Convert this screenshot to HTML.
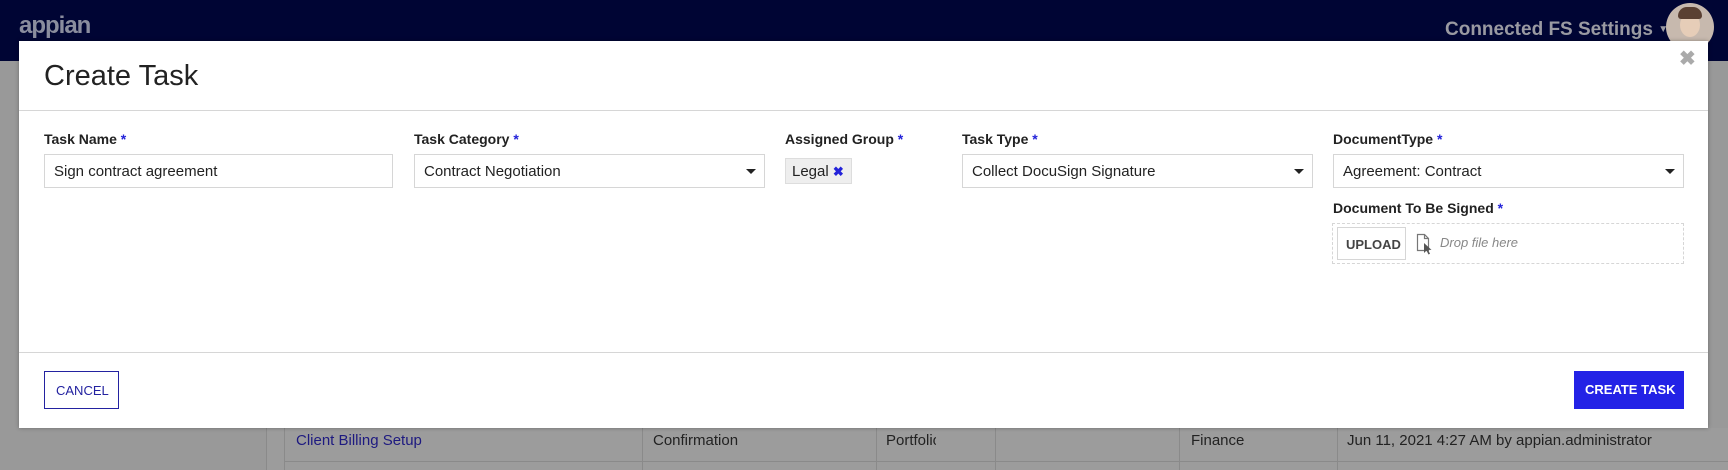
<!DOCTYPE html>
<html><head><meta charset="utf-8"><style>
*{box-sizing:border-box;margin:0;padding:0}
body{width:1728px;height:470px;overflow:hidden;background:#999;font-family:"Liberation Sans",sans-serif;position:relative}
.nav{position:absolute;left:0;top:0;width:1728px;height:61px;background:#000534}
.abs{position:absolute}
.lbl{position:absolute;font-size:14px;font-weight:bold;color:#222}
.lbl b{color:#2322d9}
.inp{position:absolute;height:34px;border:1px solid #d6d6d6;background:#fff;font-size:15px;color:#222;padding:8px 9px;white-space:nowrap}
.arr{position:absolute;right:8px;top:14px;width:0;height:0;border-left:5px solid transparent;border-right:5px solid transparent;border-top:5px solid #222}
.tx{position:absolute;font-size:15px;color:#222;top:432px}
.vl{position:absolute;top:428px;height:42px;width:1px;background:#8a8a8a}
</style></head><body>
<div class="nav"></div>
<div class="abs" style="left:19px;top:12px;font-size:24px;color:#8a8d9e;font-weight:bold;letter-spacing:-1px">appian</div>
<div class="abs" style="left:1445px;top:19px;font-size:19px;color:#9a9aa2;font-weight:bold">Connected FS Settings <span style="font-size:10px;vertical-align:3px">▼</span></div>
<div class="abs" style="left:1666px;top:3px;width:48px;height:48px;border-radius:50%;background:#c7b9ae;overflow:hidden"><div style="position:absolute;left:14px;top:10px;width:20px;height:24px;border-radius:50%;background:#e6cdb8"></div><div style="position:absolute;left:12px;top:4px;width:24px;height:12px;border-radius:12px 12px 4px 4px;background:#5a4032"></div></div>
<!-- background table -->
<div class="abs" style="left:266px;top:428px;width:1462px;height:42px;background:#9c9c9c"></div>
<div class="abs" style="left:284px;top:461px;width:1444px;height:1px;background:#8a8a8a"></div>
<div class="vl" style="left:266px"></div><div class="vl" style="left:284px"></div><div class="vl" style="left:642px"></div><div class="vl" style="left:876px"></div><div class="vl" style="left:995px"></div><div class="vl" style="left:1179px"></div><div class="vl" style="left:1337px"></div>
<div class="tx" style="left:296px;color:#1e1a80">Client Billing Setup</div>
<div class="tx" style="left:653px">Confirmation</div>
<div class="tx" style="left:886px;width:50px;overflow:hidden;white-space:nowrap">Portfolio</div>
<div class="tx" style="left:1191px">Finance</div>
<div class="tx" style="left:1347px">Jun 11, 2021 4:27 AM by appian.administrator</div>
<!-- modal -->
<div class="abs" style="left:19px;top:41px;width:1689px;height:387px;background:#fff;box-shadow:0 0 4px rgba(0,0,0,.3)"></div>
<div class="abs" style="left:44px;top:60px;font-size:29px;color:#222">Create Task</div>
<div class="abs" style="left:1679px;top:46px;font-size:20px;color:#aaa;font-weight:bold">✖</div>
<div class="abs" style="left:19px;top:110px;width:1689px;height:1px;background:#d6d6d6"></div>
<div class="abs" style="left:19px;top:352px;width:1689px;height:1px;background:#d6d6d6"></div>

<div class="lbl" style="left:44px;top:131px">Task Name <b>*</b></div>
<div class="inp" style="left:44px;top:154px;width:349px">Sign contract agreement</div>
<div class="lbl" style="left:414px;top:131px">Task Category <b>*</b></div>
<div class="inp" style="left:414px;top:154px;width:351px">Contract Negotiation<span class="arr"></span></div>
<div class="lbl" style="left:785px;top:131px">Assigned Group <b>*</b></div>
<div class="abs" style="left:785px;top:158px;width:67px;height:26px;background:#eee;border:1px solid #ddd;font-size:15px;color:#222;padding:4px 6px">Legal <span style="color:#2322d9;font-size:13px;font-weight:bold">✖</span></div>
<div class="lbl" style="left:962px;top:131px">Task Type <b>*</b></div>
<div class="inp" style="left:962px;top:154px;width:351px">Collect DocuSign Signature<span class="arr"></span></div>
<div class="lbl" style="left:1333px;top:131px">DocumentType <b>*</b></div>
<div class="inp" style="left:1333px;top:154px;width:351px">Agreement: Contract<span class="arr"></span></div>
<div class="lbl" style="left:1333px;top:200px">Document To Be Signed <b>*</b></div>
<div class="abs" style="left:1332px;top:223px;width:352px;height:41px;border:1px dashed #d6d6d6"></div>
<div class="abs" style="left:1337px;top:227px;width:69px;height:33px;border:1px solid #d6d6d6;font-size:13px;font-weight:bold;color:#444;padding:9px 0 0 8px">UPLOAD</div>
<svg class="abs" style="left:1416px;top:233px" width="18" height="22" viewBox="0 0 18 22"><path d="M1.5 1.5h7l4 4v12h-11z M8.5 1.5v4h4" fill="none" stroke="#777" stroke-width="1.2"/><path d="M8 10l0 10 2.5-2.5 2 4 1.5-.8-2-3.8h3.5z" fill="#555"/></svg>
<div class="abs" style="left:1440px;top:235px;font-size:13px;font-style:italic;color:#888">Drop file here</div>

<div class="abs" style="left:44px;top:371px;width:75px;height:38px;border:1px solid #2322a0;color:#2322a0;font-size:13px;padding:11px 0 0 11px">CANCEL</div>
<div class="abs" style="left:1574px;top:371px;width:110px;height:38px;background:#2322e6;color:#fff;font-size:13px;font-weight:bold;padding:11px 0 0 11px">CREATE TASK</div>
</body></html>
